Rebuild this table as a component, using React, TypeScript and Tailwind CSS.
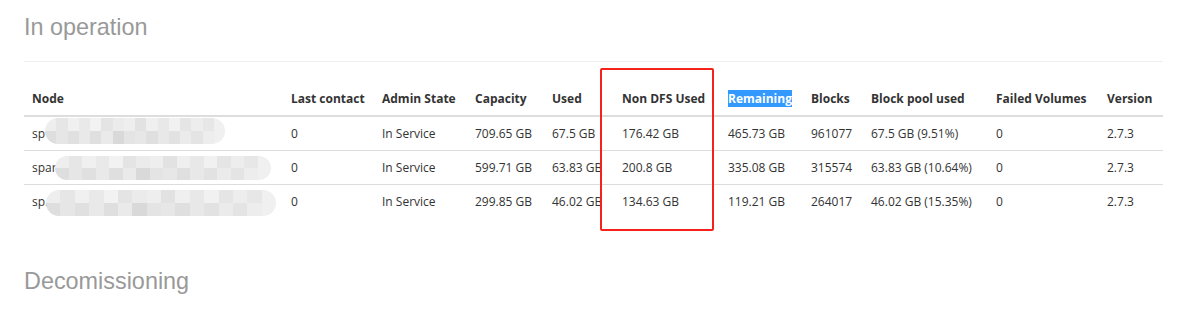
import React from "react";

type Row = {
  prefix: string;
  blob: string;
  cells: string[];
};

const headers = [
  "Node",
  "Last contact",
  "Admin State",
  "Capacity",
  "Used",
  "Non DFS Used",
  "Remaining",
  "Blocks",
  "Block pool used",
  "Failed Volumes",
  "Version",
];

const widths = [
  "w-[259px]",
  "w-[91px]",
  "w-[93px]",
  "w-[77px]",
  "w-[70px]",
  "w-[106px]",
  "w-[83px]",
  "w-[60px]",
  "w-[125px]",
  "w-[111px]",
  "w-[64px]",
];

const rows: Row[] = [
  {
    prefix: "sp",
    blob: "left-[21px] top-[1px] w-[180px] h-[26px]",
    cells: ["0", "In Service", "709.65 GB", "67.5 GB", "176.42 GB", "465.73 GB", "961077", "67.5 GB (9.51%)", "0", "2.7.3"],
  },
  {
    prefix: "spar",
    blob: "left-[31px] top-[5px] w-[216px] h-[24px]",
    cells: ["0", "In Service", "599.71 GB", "63.83 GB", "200.8 GB", "335.08 GB", "315574", "63.83 GB (10.64%)", "0", "2.7.3"],
  },
  {
    prefix: "sp.",
    blob: "left-[22px] top-[5px] w-[230px] h-[26px]",
    cells: ["0", "In Service", "299.85 GB", "46.02 GB", "134.63 GB", "119.21 GB", "264017", "46.02 GB (15.35%)", "0", "2.7.3"],
  },
];

const mosaic = [
  ["bg-[#eeeeee]", "bg-[#e6e6e6]", "bg-[#f0f0f0]", "bg-[#e9e9e9]", "bg-[#f2f2f2]", "bg-[#e4e4e4]", "bg-[#ebebeb]", "bg-[#eeeeee]", "bg-[#e2e2e2]", "bg-[#efefef]", "bg-[#e8e8e8]", "bg-[#f1f1f1]", "bg-[#e5e5e5]", "bg-[#ededed]", "bg-[#e7e7e7]", "bg-[#f0f0f0]"],
  ["bg-[#dedede]", "bg-[#e6e6e6]", "bg-[#e0e0e0]", "bg-[#e9e9e9]", "bg-[#dfdfdf]", "bg-[#eaeaea]", "bg-[#d9d9d9]", "bg-[#e4e4e4]", "bg-[#e7e7e7]", "bg-[#dfdfdf]", "bg-[#e8e8e8]", "bg-[#e2e2e2]", "bg-[#ebebeb]", "bg-[#e4e4e4]", "bg-[#ededed]", "bg-[#f0f0f0]"],
];

function Blob({ className }: { className: string }) {
  return (
    <div className={`absolute ${className} overflow-hidden rounded-full blur-[0.5px] flex flex-col`}>
      {mosaic.map((line, i) => (
        <div key={i} className="flex flex-1">
          {line.map((c, j) => (
            <div key={j} className={`flex-1 ${c}`} />
          ))}
        </div>
      ))}
    </div>
  );
}

export default function App() {
  return (
    <div className="relative w-[1187px] h-[313px] bg-white px-6 font-['Open_Sans','Noto_Sans',sans-serif] text-[12px] text-[#333]">
      <h2 className="pt-[14px] font-['Liberation_Sans',Arial,sans-serif] text-[23.4px] leading-[26px] text-[#999]">
        In operation
      </h2>
      <hr className="mt-[21px] border-0 border-t border-[#eee]" />

      <table className="mt-5 w-[1139px] table-fixed border-collapse">
        <colgroup>
          {widths.map((w, i) => (
            <col key={i} className={w} />
          ))}
        </colgroup>
        <thead>
          <tr className="border-b-2 border-[#ddd]">
            {headers.map((h) => (
              <th key={h} className="px-2 pt-2 pb-[7px] text-left font-bold leading-[18px] whitespace-nowrap">
                {h === "Remaining" ? (
                  <span className="bg-[#3399ff] text-white">{h}</span>
                ) : (
                  h
                )}
              </th>
            ))}
          </tr>
        </thead>
        <tbody>
          {rows.map((r, i) => (
            <tr key={i} className={i < rows.length - 1 ? "border-b border-[#ddd]" : ""}>
              <td className="relative px-2 pt-2 pb-[7px] leading-[18px]">
                {r.prefix}
                <Blob className={r.blob} />
              </td>
              {r.cells.map((c, j) => (
                <td key={j} className="px-2 pt-2 pb-[7px] leading-[18px] whitespace-nowrap">
                  {c}
                </td>
              ))}
            </tr>
          ))}
        </tbody>
      </table>

      <h2 className="mt-[50px] font-['Liberation_Sans',Arial,sans-serif] text-[23.4px] leading-[26px] text-[#999]">
        Decomissioning
      </h2>

      <div className="absolute left-[600px] top-[68px] w-[114px] h-[163px] rounded-[2px] border-2 border-[#f5221b]" />
    </div>
  );
}
